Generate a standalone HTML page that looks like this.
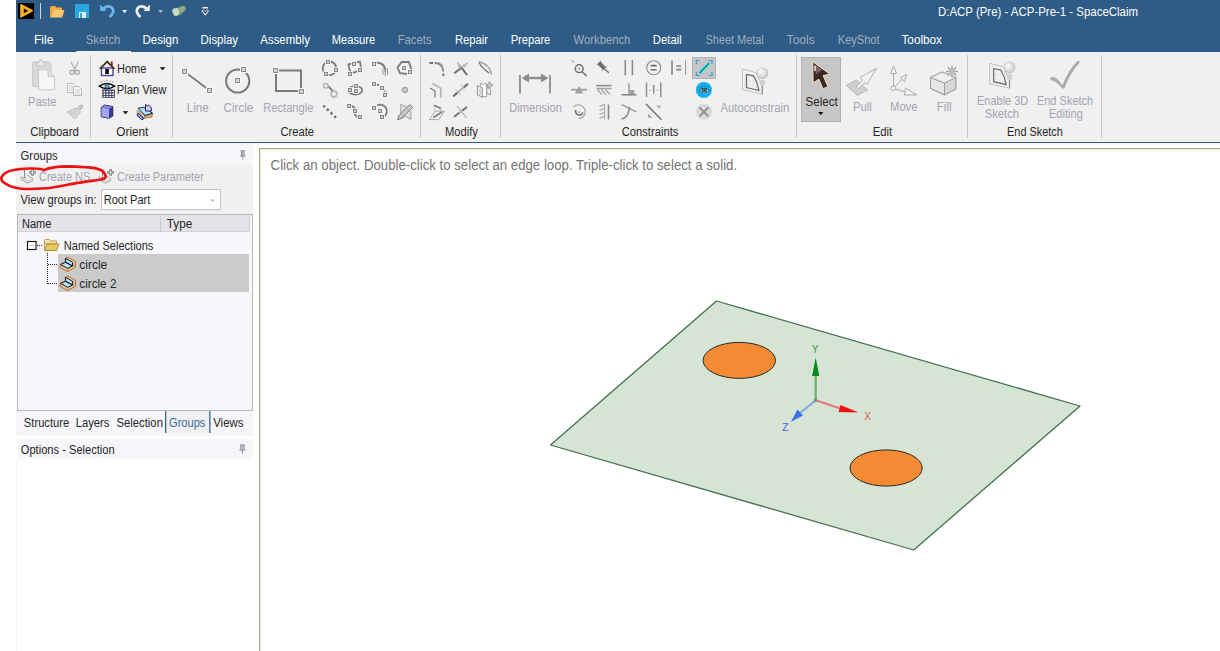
<!DOCTYPE html>
<html><head><meta charset="utf-8">
<style>
*{margin:0;padding:0}
html,body{width:1220px;height:651px;overflow:hidden;background:#fff}
svg{position:absolute;left:0;top:0;display:block}
text{font-family:"Liberation Sans",sans-serif;white-space:pre}
</style></head><body>
<svg width="1220" height="651" viewBox="0 0 1220 651">
<rect x="16" y="0" width="1204" height="52" fill="#2e5c87"/>
<rect x="16" y="52" width="1204" height="90" fill="#f0f0f0"/>
<rect x="76.5" y="51" width="54.5" height="1.2" fill="#f6f4f2"/>
<rect x="16" y="142" width="1204" height="1" fill="#2e5c87"/>
<rect x="18" y="3" width="16" height="16" fill="#000"/>
<path d="M21 4.8 L32.2 10.7 L21 16.9 Z" fill="#f7b41f" stroke="#f7b41f" stroke-width="1.6" stroke-linejoin="round"/><path d="M23.8 8.4 L28.3 10.8 L23.8 13.3 Z" fill="#000"/>
<rect x="40" y="3" width="1" height="16" fill="#cfd2d6"/>
<path d="M50 8 Q50 6 52 6 L55 6 L56.5 7.5 L61 7.5 Q62 7.5 62 8.5 L62 10 L50 10 Z" fill="#f5ae3a"/>
<path d="M50.5 17.6 L52.8 10 L64.5 10 L62.2 17.6 Z" fill="#fcc870"/>
<path d="M50 8 L50 17.6 L50.8 17.6 L52.8 10 L50.5 10 Z" fill="#f0a535"/>
<rect x="75" y="4" width="14" height="14" fill="#29a9e1"/>
<rect x="79" y="12" width="7" height="6" fill="#eeeae6"/>
<rect x="80" y="13" width="2" height="5" fill="#29a9e1"/>
<path d="M103.5 8.5 Q107 5.5 110.5 6.8 Q114 8.5 113 12.5 Q112 15 109.5 17" fill="none" stroke="#6bb8f0" stroke-width="2.7"/>
<path d="M100.2 4.5 L100.2 11 L106.5 11 Z" fill="#6bb8f0"/>
<path d="M122 10 L127.2 10 L124.6 13.2 Z" fill="#fff"/>
<path d="M146.5 8.5 Q143 5.5 139.5 6.8 Q136 8.5 137 12.5 Q138 15 140.5 17" fill="none" stroke="#efefef" stroke-width="2.7"/>
<path d="M149.8 4.5 L149.8 11 L143.5 11 Z" fill="#efefef"/>
<path d="M158 10 L163.2 10 L160.6 13.2 Z" fill="#b8aca8"/>
<path d="M176.5 8.5 L181.5 6 L185 6.2 L186.2 9 L184.5 11.2 L179.5 15.5 L177.5 14 Z" fill="#7f9f74"/>
<path d="M178 9.5 L184.5 7 M178.5 12 L185 8.8" stroke="#a8c098" stroke-width="0.8"/>
<path d="M172.1 11.5 L173.3 8.6 L177.3 8.1 L179.2 11.2 L178.2 15.4 L174.3 16.1 Z" fill="#c8dcc0"/>
<rect x="202.5" y="7" width="5.5" height="1.5" fill="#eef0f4"/>
<path d="M202.6 10.3 L205.3 13.6 L208 10.3" fill="none" stroke="#f0f0f0" stroke-width="2.6"/><path d="M203.2 10.6 L205.3 13 L207.4 10.6" fill="none" stroke="#2b2b2b" stroke-width="1.1"/>
<text x="33.9" y="44" font-size="12" fill="#ffffff" textLength="19.7" lengthAdjust="spacingAndGlyphs">File</text>
<text x="85.8" y="44" font-size="12" fill="#a3adb8" textLength="34.6" lengthAdjust="spacingAndGlyphs">Sketch</text>
<text x="142.4" y="44" font-size="12" fill="#ffffff" textLength="36.0" lengthAdjust="spacingAndGlyphs">Design</text>
<text x="200.6" y="44" font-size="12" fill="#ffffff" textLength="37.5" lengthAdjust="spacingAndGlyphs">Display</text>
<text x="260.3" y="44" font-size="12" fill="#ffffff" textLength="49.6" lengthAdjust="spacingAndGlyphs">Assembly</text>
<text x="331.8" y="44" font-size="12" fill="#ffffff" textLength="43.4" lengthAdjust="spacingAndGlyphs">Measure</text>
<text x="397.7" y="44" font-size="12" fill="#a3adb8" textLength="33.9" lengthAdjust="spacingAndGlyphs">Facets</text>
<text x="454.9" y="44" font-size="12" fill="#ffffff" textLength="33.2" lengthAdjust="spacingAndGlyphs">Repair</text>
<text x="510.7" y="44" font-size="12" fill="#ffffff" textLength="39.6" lengthAdjust="spacingAndGlyphs">Prepare</text>
<text x="573.6" y="44" font-size="12" fill="#a3adb8" textLength="56.7" lengthAdjust="spacingAndGlyphs">Workbench</text>
<text x="652.8" y="44" font-size="12" fill="#ffffff" textLength="29.0" lengthAdjust="spacingAndGlyphs">Detail</text>
<text x="705.6" y="44" font-size="12" fill="#a3adb8" textLength="58.1" lengthAdjust="spacingAndGlyphs">Sheet Metal</text>
<text x="786.6" y="44" font-size="12" fill="#a3adb8" textLength="28.2" lengthAdjust="spacingAndGlyphs">Tools</text>
<text x="837.8" y="44" font-size="12" fill="#a3adb8" textLength="41.8" lengthAdjust="spacingAndGlyphs">KeyShot</text>
<text x="901.5" y="44" font-size="12" fill="#ffffff" textLength="40.5" lengthAdjust="spacingAndGlyphs">Toolbox</text>
<text x="938" y="16.3" font-size="12.3" fill="#fff" textLength="200" lengthAdjust="spacingAndGlyphs">D:ACP (Pre) - ACP-Pre-1 - SpaceClaim</text>
<g fill="#c6c6c6">
<rect x="90" y="55" width="1" height="83"/>
<rect x="172" y="55" width="1" height="83"/>
<rect x="420" y="55" width="1" height="83"/>
<rect x="500" y="55" width="1" height="83"/>
<rect x="796" y="55" width="1" height="83"/>
<rect x="967" y="55" width="1" height="83"/>
<rect x="1101" y="55" width="1" height="83"/>
</g>
<!-- paste -->
<rect x="32.5" y="62" width="18.5" height="24.5" rx="1.5" fill="#d9d9d9" stroke="#cacaca"/>
<path d="M36.5 62.5 L39 62.5 Q39 59.8 41 59.8 Q43 59.8 43 62.5 L45.5 62.5 L45.5 66 L36.5 66 Z" fill="#e8e8e8" stroke="#c4c4c4"/>
<path d="M38.5 69.8 L48 69.8 L54.5 76.3 L54.5 89.8 L38.5 89.8 Z" fill="#f6f6f6" stroke="#c8c8c8"/>
<path d="M48 69.8 L48 76.3 L54.5 76.3" fill="#e4e4e4" stroke="#c8c8c8"/>
<!-- scissors -->
<path d="M71 61.5 L75.5 70.5 M78.5 61.5 L74 70.5" stroke="#b4b4b4" stroke-width="1.3" fill="none"/>
<circle cx="72" cy="72.3" r="2.2" fill="#e6e6e6" stroke="#a8a8a8" stroke-width="1.1"/>
<circle cx="77.3" cy="72.3" r="2.2" fill="#e6e6e6" stroke="#a8a8a8" stroke-width="1.1"/>
<!-- copy -->
<path d="M67.5 83.5 L73.5 83.5 L75.5 85.5 L75.5 92.5 L67.5 92.5 Z" fill="#f8f8f8" stroke="#bdbdbd"/>
<path d="M73.5 86.5 L79 86.5 L81.5 89 L81.5 95.5 L73.5 95.5 Z" fill="#f8f8f8" stroke="#b8b8b8"/>
<path d="M69 86h4.5M69 88h4.5M69 90h4M75 90h5M75 92h5M75 94h5" stroke="#c4c4c4" stroke-width="0.8"/>
<!-- brush -->
<path d="M78 107.5 L81.5 104.8 L83 106.8 L80.5 110 Z" fill="#c8c8c8" stroke="#a8a8a8" stroke-width="0.8"/>
<path d="M67.5 112 L76.5 108 L80.5 112 L74.5 119 Z" fill="#e8e8e8" stroke="#a8a8a8" stroke-width="0.9"/>
<path d="M69 112.5 L77 109.5 L79 112 L74 117 Z" fill="#d0d0d0"/>
<!-- home -->
<rect x="101.5" y="68" width="11.5" height="7.5" fill="#fff" stroke="#4a3f9f" stroke-width="1.4"/>
<rect x="105.3" y="69" width="3.5" height="5" fill="#000"/>
<path d="M99.8 68.8 L107.2 61.6 L114.3 68.8" fill="none" stroke="#3b3a15" stroke-width="1.8"/>
<rect x="111" y="61.5" width="1.6" height="5" fill="#8a1010"/>
<path d="M159.8 67.2 L165.3 67.2 L162.55 70.2 Z" fill="#000"/>
<!-- plan view -->
<path d="M99.3 86.2 Q107 80.8 114.6 86.2 Q107 91.2 99.3 86.2 Z" fill="#fff" stroke="#111" stroke-width="1.5"/>
<circle cx="107" cy="86.2" r="2.1" fill="#5fa8c0" stroke="#2a4860" stroke-width="0.7"/>
<path d="M101.5 82.5 L100.8 81.3 M104.2 81.5 L103.9 80.6 M107 81.1 V80.1 M109.8 81.5 L110.1 80.6 M112.5 82.5 L113.2 81.3" stroke="#333" stroke-width="0.8"/>
<rect x="102.3" y="89.5" width="12.5" height="8.3" fill="#35335f"/>
<g fill="#fff">
<rect x="103.5" y="90.8" width="1.8" height="1.6"/><rect x="106.5" y="90.8" width="1.8" height="1.6"/><rect x="109.5" y="90.8" width="1.8" height="1.6"/><rect x="112.3" y="90.8" width="1.6" height="1.6"/>
<rect x="103.5" y="93.4" width="1.8" height="1.6"/><rect x="106.5" y="93.4" width="1.8" height="1.6"/><rect x="109.5" y="93.4" width="1.8" height="1.6"/><rect x="112.3" y="93.4" width="1.6" height="1.6"/>
<rect x="103.5" y="95.8" width="1.8" height="1.2"/><rect x="106.5" y="95.8" width="1.8" height="1.2"/><rect x="109.5" y="95.8" width="1.8" height="1.2"/><rect x="112.3" y="95.8" width="1.6" height="1.2"/>
</g>
<!-- cube -->
<path d="M101.2 107.5 L104.5 105 L112.8 106.5 L112.8 116 L109 118.3 L101.2 116.8 Z" fill="#3b3b9a" stroke="#1f1f5a" stroke-width="0.9"/>
<path d="M101.5 107.6 L109 109 L109 118 L101.5 116.6 Z" fill="#a4a4f2"/>
<path d="M101.5 107.5 L104.6 105.3 L112.5 106.7 L109 109 Z" fill="#8585dd"/>
<path d="M122.7 111.2 L128.3 111.2 L125.5 114.2 Z" fill="#000"/>
<!-- orient icon 2 -->
<path d="M137.2 110.4 L145 115.4 L144.6 118.4 L137.2 113.6 Z" fill="#f2cfa4" stroke="#8a6a40" stroke-width="0.6"/>
<path d="M145 115.4 L152.7 113.3 L152 117.1 L144.6 118.4 Z" fill="#d9a870" stroke="#8a6a40" stroke-width="0.6"/>
<path d="M137.9 108.4 L143.7 107.3 L152.7 113.3 L145 115.4 Z" fill="#b0e0f4" stroke="#102838" stroke-width="1"/>
<path d="M145.5 104.5 L145.5 111 L151.5 111 L151.2 107.5 L148.8 105.3 L147.3 106 Z" fill="#d4d0f8" stroke="#20206a" stroke-width="1"/>
<path d="M138.3 114.8 L142.2 118.4" stroke="#20206a" stroke-width="3.2" stroke-linecap="round"/>
<path d="M138.3 114.8 L142.2 118.4" stroke="#b8b8f0" stroke-width="1.4" stroke-linecap="round"/>
<line x1="187" y1="73.5" x2="207" y2="88.5" stroke="#fafafa" stroke-width="4"/><line x1="187" y1="73.5" x2="207" y2="88.5" stroke="#7b7b7b" stroke-width="2"/>
<rect x="181" y="68" width="7" height="7" fill="#fafafa"/><rect x="182.5" y="69.5" width="4" height="4" fill="#d6d6d6" stroke="#8a8a8a" stroke-width="1"/>
<rect x="206" y="87" width="7" height="7" fill="#fafafa"/><rect x="207.5" y="88.5" width="4" height="4" fill="#d6d6d6" stroke="#8a8a8a" stroke-width="1"/>
<circle cx="237.7" cy="81" r="11.6" fill="none" stroke="#7b7b7b" stroke-width="2"/>
<rect x="234" y="77" width="7" height="7" fill="#fafafa"/><rect x="235.5" y="78.5" width="4" height="4" fill="#d6d6d6" stroke="#8a8a8a" stroke-width="1"/>
<rect x="240" y="66" width="7" height="7" fill="#fafafa"/><rect x="241.5" y="67.5" width="4" height="4" fill="#d6d6d6" stroke="#8a8a8a" stroke-width="1"/>
<rect x="276" y="70.5" width="25" height="20.5" fill="none" stroke="#7b7b7b" stroke-width="2"/>
<rect x="272" y="67" width="7" height="7" fill="#fafafa"/><rect x="273.5" y="68.5" width="4" height="4" fill="#d6d6d6" stroke="#8a8a8a" stroke-width="1"/>
<rect x="298" y="88" width="7" height="7" fill="#fafafa"/><rect x="299.5" y="89.5" width="4" height="4" fill="#d6d6d6" stroke="#8a8a8a" stroke-width="1"/>
<circle cx="329.5" cy="68.3" r="6.8" fill="none" stroke="#7b7b7b" stroke-width="1.8"/>
<rect x="325.20" y="59.20" width="5.6" height="5.6" fill="#fafafa"/><rect x="326.50" y="60.50" width="3" height="3" fill="#d4d4d4" stroke="#858585" stroke-width="1"/>
<rect x="333.20" y="67.20" width="5.6" height="5.6" fill="#fafafa"/><rect x="334.50" y="68.50" width="3" height="3" fill="#d4d4d4" stroke="#858585" stroke-width="1"/>
<rect x="323.20" y="71.20" width="5.6" height="5.6" fill="#fafafa"/><rect x="324.50" y="72.50" width="3" height="3" fill="#d4d4d4" stroke="#858585" stroke-width="1"/>
<path d="M348.3 64.3 L360 61.5 L361.3 70.3 L350.5 73.3 Z" fill="none" stroke="#7b7b7b" stroke-width="1.8"/>
<rect x="351.20" y="61.20" width="5.6" height="5.6" fill="#fafafa"/><rect x="352.50" y="62.50" width="3" height="3" fill="#d4d4d4" stroke="#858585" stroke-width="1"/>
<rect x="357.20" y="67.20" width="5.6" height="5.6" fill="#fafafa"/><rect x="358.50" y="68.50" width="3" height="3" fill="#d4d4d4" stroke="#858585" stroke-width="1"/>
<rect x="347.20" y="71.20" width="5.6" height="5.6" fill="#fafafa"/><rect x="348.50" y="72.50" width="3" height="3" fill="#d4d4d4" stroke="#858585" stroke-width="1"/>
<path d="M376 62.5 Q385.5 62.5 385.5 72" fill="none" stroke="#7b7b7b" stroke-width="1.8"/><path d="M383 68 V75 M387.5 68 V75" stroke="#9a9a9a" stroke-width="1"/><rect x="384.5" y="70" width="1.6" height="6" fill="#b0b0b0"/>
<rect x="371.20" y="61.20" width="5.6" height="5.6" fill="#fafafa"/><rect x="372.50" y="62.50" width="3" height="3" fill="#d4d4d4" stroke="#858585" stroke-width="1"/>
<path d="M409.5 71.5 L411.5 69.5 L408.8 62 L401.8 62 L397.5 67.5 L400 73.2 L407 74" fill="none" stroke="#7b7b7b" stroke-width="1.8"/>
<rect x="401.20" y="65.20" width="5.6" height="5.6" fill="#fafafa"/><rect x="402.50" y="66.50" width="3" height="3" fill="#d4d4d4" stroke="#858585" stroke-width="1"/>
<rect x="407.20" y="69.20" width="5.6" height="5.6" fill="#fafafa"/><rect x="408.50" y="70.50" width="3" height="3" fill="#d4d4d4" stroke="#858585" stroke-width="1"/>
<line x1="327" y1="84.8" x2="334.5" y2="92.8" stroke="#7b7b7b" stroke-width="1.8"/><circle cx="325.8" cy="85.8" r="2.3" fill="#f4f4f4" stroke="#b4b4b4" stroke-width="1.5"/><circle cx="334" cy="94" r="2.8" fill="#f4f4f4" stroke="#b4b4b4" stroke-width="1.7"/>
<ellipse cx="355.3" cy="90.3" rx="7" ry="4.2" fill="none" stroke="#7b7b7b" stroke-width="1.8"/>
<rect x="347.20" y="87.20" width="5.6" height="5.6" fill="#fafafa"/><rect x="348.50" y="88.50" width="3" height="3" fill="#d4d4d4" stroke="#858585" stroke-width="1"/>
<rect x="353.20" y="83.20" width="5.6" height="5.6" fill="#fafafa"/><rect x="354.50" y="84.50" width="3" height="3" fill="#d4d4d4" stroke="#858585" stroke-width="1"/>
<rect x="353.20" y="88.20" width="5.6" height="5.6" fill="#fafafa"/><rect x="354.50" y="89.50" width="3" height="3" fill="#d4d4d4" stroke="#858585" stroke-width="1"/>
<path d="M376 84.5 Q383 85.5 386 94" fill="none" stroke="#7b7b7b" stroke-width="2" stroke-dasharray="3 1.5"/>
<rect x="371.20" y="81.20" width="5.6" height="5.6" fill="#fafafa"/><rect x="372.50" y="82.50" width="3" height="3" fill="#d4d4d4" stroke="#858585" stroke-width="1"/>
<rect x="379.20" y="85.20" width="5.6" height="5.6" fill="#fafafa"/><rect x="380.50" y="86.50" width="3" height="3" fill="#d4d4d4" stroke="#858585" stroke-width="1"/>
<rect x="382.20" y="92.20" width="5.6" height="5.6" fill="#fafafa"/><rect x="383.50" y="93.50" width="3" height="3" fill="#d4d4d4" stroke="#858585" stroke-width="1"/>
<circle cx="404.9" cy="89.9" r="2.8" fill="#c6c6c6" stroke="#9c9c9c" stroke-width="1"/>
<rect x="322.90000000000003" y="105.2" width="2.4" height="2.4" fill="#6e6e6e" transform="rotate(45 324.1 106.4)"/><rect x="326.6" y="108.5" width="2.4" height="2.4" fill="#6e6e6e" transform="rotate(45 327.8 109.7)"/><rect x="330.3" y="112.1" width="2.4" height="2.4" fill="#6e6e6e" transform="rotate(45 331.5 113.3)"/><rect x="334.0" y="115.7" width="2.4" height="2.4" fill="#6e6e6e" transform="rotate(45 335.2 116.9)"/>
<path d="M350.5 106 Q355 106.5 355.5 110 M354.5 113 Q355 116.5 359.5 117.5" fill="none" stroke="#7b7b7b" stroke-width="1.8"/>
<rect x="346.20" y="103.20" width="5.6" height="5.6" fill="#fafafa"/><rect x="347.50" y="104.50" width="3" height="3" fill="#d4d4d4" stroke="#858585" stroke-width="1"/>
<rect x="352.20" y="108.20" width="5.6" height="5.6" fill="#fafafa"/><rect x="353.50" y="109.50" width="3" height="3" fill="#d4d4d4" stroke="#858585" stroke-width="1"/>
<rect x="357.20" y="114.20" width="5.6" height="5.6" fill="#fafafa"/><rect x="358.50" y="115.50" width="3" height="3" fill="#d4d4d4" stroke="#858585" stroke-width="1"/>
<path d="M377 105.5 A6.5 6.5 0 1 1 383.5 117" fill="none" stroke="#7b7b7b" stroke-width="1.8"/>
<rect x="371.20" y="105.20" width="5.6" height="5.6" fill="#fafafa"/><rect x="372.50" y="106.50" width="3" height="3" fill="#d4d4d4" stroke="#858585" stroke-width="1"/>
<rect x="377.20" y="108.20" width="5.6" height="5.6" fill="#fafafa"/><rect x="378.50" y="109.50" width="3" height="3" fill="#d4d4d4" stroke="#858585" stroke-width="1"/>
<rect x="379.20" y="114.20" width="5.6" height="5.6" fill="#fafafa"/><rect x="380.50" y="115.50" width="3" height="3" fill="#d4d4d4" stroke="#858585" stroke-width="1"/>
<path d="M400.8 104.3 L406 106.5 L411 112 L411 119.5 L405.5 116.5 L400.8 119 Z" fill="#dcdcdc" stroke="#9c9c9c" stroke-width="0.9"/>
<path d="M397.5 120 L399 115.5 L409.8 104.6 L412.5 107.3 L401.7 118.2 Z" fill="#c8c8c8" stroke="#7a7a7a" stroke-width="1"/>
<g fill="none">
<path d="M429.5 63 H433" stroke="#6e6e6e" stroke-width="2"/>
<path d="M434.5 63 Q443.2 63 443.2 71.5" stroke="#8a8a8a" stroke-width="2"/>
<path d="M439 62 Q442 63 442.8 66" stroke="#c0c0c0" stroke-width="1"/>
<path d="M443.3 73.5 V76" stroke="#6e6e6e" stroke-width="2"/>
<path d="M454.2 73.2 L461.6 67.7 L467.1 75.1" stroke="#707070" stroke-width="2"/>
<path d="M457.3 62.5 L461.6 67.7 M467.6 63 L461.6 67.7" stroke="#a8a8a8" stroke-width="1.2"/>
<circle cx="459.5" cy="66" r="1.6" fill="#b8b8b8"/><circle cx="464.3" cy="65.8" r="1.6" fill="#b8b8b8"/>
<path d="M478.8 61.8 Q489.5 64 491.5 74.3" stroke="#a0a0a0" stroke-width="1.6"/>
<path d="M479 62.5 Q482 68 489 73" stroke="#6e6e6e" stroke-width="1.2"/>
<path d="M432.5 83.5 L440.8 88.3 L440.8 97.5" stroke="#b4b4b4" stroke-width="1.8"/>
<path d="M430 88 L435 91 L435 97.5" stroke="#6e6e6e" stroke-width="1.1"/>
<path d="M456 93.8 L465 86.2" stroke="#9a9a9a" stroke-width="1.3"/>
<path d="M453.8 95.8 L456.8 93.2 M464.3 86.8 L467.3 84.3" stroke="#707070" stroke-width="2.2" stroke-linecap="round"/>
<path d="M455.5 89.5 L461 95.5 M460 84 L465.5 90.5" stroke="#c0c0c0" stroke-width="1"/>
<circle cx="458.5" cy="92" r="1.3" fill="#b4b4b4"/><circle cx="463" cy="88" r="1.3" fill="#b4b4b4"/>
<path d="M480.4 83.2 L483.5 84.5 L485.3 83.3 L486.7 84 L486.7 96.6 L480.4 96.6 Z" fill="#fbfbfb" stroke="#9a9a9a" stroke-width="0.9"/>
<path d="M486.8 86.8 L490.6 89.1 L490.6 94.9 L486.8 93.2 Z" fill="#ececec" stroke="#8e8e8e" stroke-width="0.9"/>
<path d="M477.4 85.4 L482.4 87.8 L482.4 97.2 L477.4 94.9 Z" fill="#f2f2f2" stroke="#8a8a8a" stroke-width="0.9"/>
<rect x="479.3" y="88.5" width="1.8" height="6" fill="#c8c8c8"/>
<path d="M489.4 81.6 L490.6 84 L493 85.2 L490.6 86.4 L489.4 88.8 L488.2 86.4 L485.8 85.2 L488.2 84 Z" fill="#cacaca" stroke="#8a8a8a" stroke-width="0.8"/>
<path d="M434.3 105.5 V111 M440.7 108.6 V112" stroke="#c4c4c4" stroke-width="0.8"/>
<path d="M434.1 105.2 L441 108.6" stroke="#7a7a7a" stroke-width="1.7"/>
<path d="M435.1 111.1 L444.4 111.1 L438.8 119.6 L429.5 119.6 Z" fill="#fafafa" stroke="#a6a6a6" stroke-width="1"/>
<path d="M433.9 117.2 L441.4 112.3" stroke="#8a8a8a" stroke-width="2.2" stroke-linecap="round"/>
<path d="M454 116.8 L467 107" stroke="#6e6e6e" stroke-width="1.8"/>
<path d="M457 106 L466.5 118" stroke="#a8a8a8" stroke-width="1.1"/>
<circle cx="461" cy="112" r="1.8" fill="#c4c4c4"/>
</g>
<g fill="none">
<!-- dimension -->
<path d="M520 75 V93.5 M550 75 V93.5" stroke="#8c8c8c" stroke-width="1.8"/>
<path d="M527 78 H543" stroke="#8c8c8c" stroke-width="2.4"/>
<path d="M521.5 78 L529 73.5 L529 82.5 Z M548.5 78 L541 73.5 L541 82.5 Z" fill="#8c8c8c"/>
<!-- coincident -->
<circle cx="579.2" cy="68.7" r="3.9" stroke="#707070" stroke-width="1.5"/>
<path d="M582.2 71.8 L586.5 76" stroke="#707070" stroke-width="1.6"/>
<path d="M571.5 60 L574.2 62.8" stroke="#8a8a8a" stroke-width="1"/>
<path d="M579.2 67.2 V70.2 M577.7 68.7 H580.7" stroke="#9a9a9a" stroke-width="0.8"/>
<!-- pin -->
<path d="M596.8 64.6 L600.6 60.8 L601.4 62.6 L605.2 66.4 L607.3 66.1 L602.1 71.3 L602.4 69.2 L598.6 65.4 Z" fill="#6e6e6e"/>
<path d="M604.5 68.7 L608.8 72.8" stroke="#6e6e6e" stroke-width="1.3"/>
<!-- parallel -->
<path d="M625.3 60 V75.3 M632.4 60 V75.3" stroke="#858585" stroke-width="1.5"/>
<!-- equal circle -->
<circle cx="653.7" cy="67.7" r="7" stroke="#8e8e8e" stroke-width="1.1"/>
<path d="M650.6 65.6 H656.6 M650.6 69.7 H656.6" stroke="#6e6e6e" stroke-width="1.6"/>
<!-- |=| -->
<path d="M672 60.5 V75" stroke="#8a8a8a" stroke-width="1.7"/>
<path d="M685.6 60.5 V75" stroke="#9a9a9a" stroke-width="1.1"/>
<path d="M676.3 66 H681.3 M676.3 69.6 H681.3" stroke="#808080" stroke-width="1.6"/>
<!-- row2 -->
<path d="M571 89.7 H587" stroke="#a0a0a0" stroke-width="1.8"/>
<path d="M579 86 L583.3 93.5 L574.7 93.5 Z" fill="#a0a0a0"/>
<path d="M596.3 85.6 H611.5" stroke="#8a8a8a" stroke-width="1.5"/>
<path d="M596.5 88.5 H611.5 M597.5 89.5 L602 94.5 M601.5 89.5 L606 94.5 M605.5 89.5 L610 94.5" stroke="#a4a4a4" stroke-width="1.3"/>
<path d="M629 83.5 V94.5" stroke="#a0a0a0" stroke-width="1.6"/>
<path d="M621.5 94.8 H636.5" stroke="#8a8a8a" stroke-width="1.6"/>
<rect x="630" y="90" width="4.3" height="4" fill="#a0a0a0"/>
<path d="M646.5 82.5 V97 M660.8 82.5 V97" stroke="#909090" stroke-width="1.5"/>
<path d="M653.7 85 V93.8" stroke="#909090" stroke-width="1.5"/>
<path d="M648.5 90.3 H651.5 M656 90.3 H659" stroke="#b8b8b8" stroke-width="0.9"/>
<!-- row3 -->
<path d="M573.5 107 A6.8 6.8 0 1 1 578.5 118.5" stroke="#a8a8a8" stroke-width="1.1"/>
<path d="M575.8 110 A3.8 3.8 0 1 0 583 112.5" stroke="#707070" stroke-width="1.6"/>
<circle cx="579" cy="112" r="0.8" fill="#808080"/>
<path d="M608.5 104.5 V119.5" stroke="#8a8a8a" stroke-width="1.6"/>
<path d="M604.5 104.5 V119.5" stroke="#a8a8a8" stroke-width="1"/>
<path d="M599.5 106.5 L604 104.5 M599.5 110.5 L604 108.5 M599.5 114.5 L604 112.5 M599.5 118.5 L604 116.5" stroke="#a4a4a4" stroke-width="1.1"/>
<path d="M621.5 104.5 L636.5 112" stroke="#8a8a8a" stroke-width="1.3"/>
<path d="M621.5 119 Q628.5 118 629.5 107" stroke="#8a8a8a" stroke-width="1.6"/>
<path d="M646 104 L661.5 119.7" stroke="#707070" stroke-width="1.5"/>
<path d="M656.5 105.5 L660.2 105.5 L660.2 109.5 Z M648 113.5 L648 117.8 L652.5 117.8 Z" fill="#a8a8a8"/>
<!-- highlighted -->
<rect x="692.5" y="57.5" width="23" height="21" fill="#c6c6c6" stroke="#b2b2b2" stroke-width="1"/>
<path d="M696.3 64 V60.5 H699.5 M708.5 60.5 H712 V64 M712 72 V75.5 H708.5 M699.5 75.5 H696.3 V72" stroke="#2e9ce2" stroke-width="1.2"/>
<path d="M699.5 73.2 L709 63.2" stroke="#20e8f0" stroke-width="3"/>
<path d="M699.5 73.2 L709 63.2" stroke="#1a3a3a" stroke-width="1"/>
<!-- blue circle -->
<circle cx="703.9" cy="90" r="8" fill="#12aff0"/>
<path d="M699 90.2 Q704 86 709.8 90.2 Q704 94 699 90.2 Z" fill="#2a2a2a"/>
<path d="M700.5 87.8 L700.2 87 M702.5 87 V86.2 M705 86.8 V86 M707.5 87.3 L707.8 86.5" stroke="#3a3a3a" stroke-width="0.8"/>
<circle cx="701.3" cy="90.4" r="0.9" fill="#f0f0f0"/><circle cx="707.5" cy="90.4" r="0.9" fill="#f0f0f0"/>
<circle cx="704.4" cy="90.3" r="1.7" fill="#5a9ab0"/><circle cx="704.4" cy="90.3" r="0.7" fill="#000"/>
<rect x="703" y="93" width="3" height="0.8" fill="#a08878"/>
<!-- gray X -->
<circle cx="703.9" cy="111.8" r="8" fill="#d9d9d9"/>
<path d="M699.4 107.3 L708.4 116.3 M708.4 107.3 L699.4 116.3" stroke="#8c8c8c" stroke-width="1.8"/>
</g>
<g fill="none">
<path d="M742.5 69.2 L756 72.5 L762.3 86 L762.3 94 L742.5 89.6 Z" fill="#f4f4f4" stroke="#b8b8b8" stroke-width="0.9"/>
<path d="M745 71 V89.5 M749 72 V90.5 M753 73 V91.5 M757 74 V92.5 M742.5 74 L760 78 M742.5 79 L761 83 M742.5 84 L762 88" stroke="#dedede" stroke-width="0.6"/>
<path d="M762.3 86 V94" stroke="#8a8a8a" stroke-width="1.2"/>
<path d="M746.5 74.5 L746.5 87.5 L759 90.5 Q757.5 82 753.5 75.8 Z" stroke="#6a6a6a" stroke-width="1.2"/>
<path d="M759.5 80.5 Q762.3 84 762.3 85 Q762.3 84 765 80.5" fill="#d0d0d0"/>
<rect x="759.8" y="80" width="5" height="5.5" rx="1" fill="#cfcfcf"/>
<circle cx="762.3" cy="73.3" r="5.9" fill="#c4c4c4"/><circle cx="762" cy="73" r="5.1" fill="#d6d6d6"/><circle cx="761.5" cy="72.4" r="3.8" fill="#e4e4e4"/><circle cx="760.9" cy="71.6" r="2.3" fill="#f4f4f4"/>
</g>
<g>
</g>
<rect x="801.5" y="57.5" width="39" height="64" fill="#c6c6c6" stroke="#b2b2b2"/>
<path d="M812.8 61.7 L830 74.2 L823.2 75.6 L828 86.7 L822.9 88.8 L818.9 79.3 L813.1 83 Z" fill="#3e2a22" stroke="#f8e4c8" stroke-width="1"/>
<path d="M814.2 64 L822 69.8 L816 74.5 Z" fill="#7a6660"/><path d="M815 66 V71" stroke="#f4f0f0" stroke-width="1.4"/>
<path d="M818.2 112 L823.3 112 L820.75 115 Z" fill="#000"/>
<!-- pull -->
<path d="M846.2 85.4 L856.4 80 L867.5 89.8 L857.7 95.5 Z" fill="#d0d0d0" stroke="#b4b4b4" stroke-width="0.9"/>
<path d="M876.6 68.2 L866.8 84.4 L865 82.5 L858.5 88.5 L856.5 86.5 L862.5 80 L860 77.6 Z" fill="#f2f2f2" stroke="#a8a8a8" stroke-width="0.9"/>
<!-- move -->
<g fill="none" stroke="#a0a0a0" stroke-width="0.9">
<path d="M893.5 86 V73"/><path d="M893.5 65.8 L896.5 73.5 L890.5 73.5 Z" fill="#f4f4f4"/>
<path d="M895 86.5 L903 78.5"/><path d="M906.5 74.5 L904.5 81.5 L900.5 77.5 Z" fill="#f4f4f4"/>
<path d="M895.5 89.5 L905 91.5"/><path d="M916.5 94.8 L904.5 95 L905.5 88.2 Z" fill="#f4f4f4"/>
<circle cx="893.2" cy="88.2" r="2.3" fill="#f4f4f4"/>
</g>
<path d="M896 89 L905 92" stroke="#c8c8c8" stroke-width="1.6"/>
<!-- fill -->
<path d="M930.5 77.5 L942 72 L955.8 77.5 L955.8 89 L944.5 94.8 L930.5 88.5 Z" fill="#e6e6e6" stroke="#9a9a9a" stroke-width="0.9"/>
<path d="M930.5 77.5 L944.5 83 L955.8 77.5 M944.5 83 V94.8" fill="none" stroke="#9a9a9a" stroke-width="0.9"/>
<path d="M944.5 83 L955.8 77.5 L955.8 89 L944.5 94.8 Z" fill="#d8d8d8"/>
<path d="M930.5 77.5 L942 72 L955.8 77.5 L944.5 83 Z" fill="#eeeeee"/>
<path d="M930.5 77.5 L942 72 L955.8 77.5 L955.8 89 L944.5 94.8 L930.5 88.5 Z M930.5 77.5 L944.5 83 L955.8 77.5 M944.5 83 V94.8" fill="none" stroke="#9a9a9a" stroke-width="0.9"/>
<circle cx="952" cy="71.4" r="4.5" fill="#f0f0f0"/>
<path d="M952 65.5 V77.3 M946.1 71.4 H957.9 M947.8 67.2 L956.2 75.6 M956.2 67.2 L947.8 75.6" stroke="#a8a8a8" stroke-width="1.5"/>
<circle cx="952" cy="71.4" r="2" fill="#c0c0c0"/>
<!-- enable 3d -->
<g transform="translate(247.2 -5.8)"><g fill="none">
<path d="M742.5 69.2 L756 72.5 L762.3 86 L762.3 94 L742.5 89.6 Z" fill="#f4f4f4" stroke="#b8b8b8" stroke-width="0.9"/>
<path d="M745 71 V89.5 M749 72 V90.5 M753 73 V91.5 M757 74 V92.5 M742.5 74 L760 78 M742.5 79 L761 83 M742.5 84 L762 88" stroke="#dedede" stroke-width="0.6"/>
<path d="M762.3 86 V94" stroke="#8a8a8a" stroke-width="1.2"/>
<path d="M746.5 74.5 L746.5 87.5 L759 90.5 Q757.5 82 753.5 75.8 Z" stroke="#6a6a6a" stroke-width="1.2"/>
<path d="M759.5 80.5 Q762.3 84 762.3 85 Q762.3 84 765 80.5" fill="#d0d0d0"/>
<rect x="759.8" y="80" width="5" height="5.5" rx="1" fill="#cfcfcf"/>
<circle cx="762.3" cy="73.3" r="5.9" fill="#c4c4c4"/><circle cx="762" cy="73" r="5.1" fill="#d6d6d6"/><circle cx="761.5" cy="72.4" r="3.8" fill="#e4e4e4"/><circle cx="760.9" cy="71.6" r="2.3" fill="#f4f4f4"/>
</g>
</g>
<!-- check -->
<path d="M1050 77.5 Q1052 75.6 1055 77 Q1059 79 1062.3 84.5 Q1067.5 70.5 1077.5 60.3 Q1080.3 59.8 1080 62.8 Q1071 72.5 1065 88 Q1063.5 90.3 1061.6 88.5 Q1058 82.5 1051.5 80.8 Q1049 79.8 1050 77.5 Z" fill="#acacac" stroke="#f6f6f6" stroke-width="0.8"/>
<text x="30.2" y="136" font-size="12" fill="#262626" textLength="48.6" lengthAdjust="spacingAndGlyphs">Clipboard</text>
<text x="116.3" y="136" font-size="12" fill="#262626" textLength="32.1" lengthAdjust="spacingAndGlyphs">Orient</text>
<text x="280.5" y="136" font-size="12" fill="#262626" textLength="33.6" lengthAdjust="spacingAndGlyphs">Create</text>
<text x="445.0" y="136" font-size="12" fill="#262626" textLength="32.9" lengthAdjust="spacingAndGlyphs">Modify</text>
<text x="621.7" y="136" font-size="12" fill="#262626" textLength="56.7" lengthAdjust="spacingAndGlyphs">Constraints</text>
<text x="872.7" y="136" font-size="12" fill="#262626" textLength="19.5" lengthAdjust="spacingAndGlyphs">Edit</text>
<text x="1007.1" y="136" font-size="12" fill="#262626" textLength="55.7" lengthAdjust="spacingAndGlyphs">End Sketch</text>
<text x="28.0" y="106" font-size="12" fill="#a4a3b0" textLength="28.4" lengthAdjust="spacingAndGlyphs">Paste</text>
<text x="186.8" y="112" font-size="12" fill="#a4a3b0" textLength="21.8" lengthAdjust="spacingAndGlyphs">Line</text>
<text x="223.6" y="112" font-size="12" fill="#a4a3b0" textLength="29.7" lengthAdjust="spacingAndGlyphs">Circle</text>
<text x="263.3" y="112" font-size="12" fill="#a4a3b0" textLength="50.1" lengthAdjust="spacingAndGlyphs">Rectangle</text>
<text x="509.3" y="112" font-size="12" fill="#a4a3b0" textLength="52.6" lengthAdjust="spacingAndGlyphs">Dimension</text>
<text x="720.5" y="112" font-size="12" fill="#a4a3b0" textLength="68.9" lengthAdjust="spacingAndGlyphs">Autoconstrain</text>
<text x="805.6" y="106" font-size="12" fill="#262626" textLength="32.0" lengthAdjust="spacingAndGlyphs">Select</text>
<text x="853.1" y="111" font-size="12" fill="#a4a3b0" textLength="18.6" lengthAdjust="spacingAndGlyphs">Pull</text>
<text x="890.1" y="111" font-size="12" fill="#a4a3b0" textLength="27.3" lengthAdjust="spacingAndGlyphs">Move</text>
<text x="936.7" y="111" font-size="12" fill="#a4a3b0" textLength="14.9" lengthAdjust="spacingAndGlyphs">Fill</text>
<text x="977.0" y="105" font-size="12" fill="#a4a3b0" textLength="51.3" lengthAdjust="spacingAndGlyphs">Enable 3D</text>
<text x="984.8" y="118" font-size="12" fill="#a4a3b0" textLength="34.2" lengthAdjust="spacingAndGlyphs">Sketch</text>
<text x="1036.9" y="105" font-size="12" fill="#a4a3b0" textLength="56.3" lengthAdjust="spacingAndGlyphs">End Sketch</text>
<text x="1048.9" y="118" font-size="12" fill="#a4a3b0" textLength="34.0" lengthAdjust="spacingAndGlyphs">Editing</text>
<text x="117.0" y="73" font-size="12" fill="#262626" textLength="29.4" lengthAdjust="spacingAndGlyphs">Home</text>
<text x="116.7" y="94" font-size="12" fill="#262626" textLength="49.7" lengthAdjust="spacingAndGlyphs">Plan View</text>
<rect x="16" y="143" width="237" height="22" fill="#f5f5fa"/>
<rect x="16" y="165" width="237" height="49" fill="#f0f0f0"/>
<!-- pin -->
<g fill="none" stroke="#8a8a8a" stroke-width="1">
<path d="M240.5 150.8 H245 M241.5 151 V156 M244 151 V156 M240 156 H245.5 M242.75 156 V159.5"/>
</g>
<rect x="242" y="151" width="2" height="5" fill="#b0b0b0"/>
<!-- create ns icons -->
<g>
<path d="M21.3 176.2 V179.5 L27.6 183.2 L32.7 180.6 V178.4 L26.5 174.7" fill="#f2f2f2" stroke="#a4a4a4" stroke-width="1"/>
<path d="M22.3 178.3 L27.6 181.3 L31.8 179.2" fill="none" stroke="#b8b8b8" stroke-width="0.9"/>
<path d="M24.5 169.5 V177.6 M23.3 169.8 H25.7 M22.8 177.6 H26.2" stroke="#8a8a8a" stroke-width="1" fill="none"/>
<path d="M31.7 169.5 H33.5 V171.5 H35.5 V173.3 H33.5 V175.3 H31.7 V173.3 H29.7 V171.5 H31.7 Z" fill="#e4e4e4" stroke="#fafafa" stroke-width="2.6" stroke-linejoin="miter"/><path d="M31.7 169.5 H33.5 V171.5 H35.5 V173.3 H33.5 V175.3 H31.7 V173.3 H29.7 V171.5 H31.7 Z" fill="#e4e4e4" stroke="#7a7a7a" stroke-width="1" stroke-linejoin="miter"/>
</g>
<g transform="translate(78 0)">
<path d="M21.3 176.2 V179.5 L27.6 183.2 L32.7 180.6 V178.4 L26.5 174.7" fill="#f2f2f2" stroke="#a4a4a4" stroke-width="1"/>
<path d="M22.3 178.3 L27.6 181.3 L31.8 179.2" fill="none" stroke="#b8b8b8" stroke-width="0.9"/>
<path d="M24.5 169.5 V177.6 M23.3 169.8 H25.7 M22.8 177.6 H26.2" stroke="#8a8a8a" stroke-width="1" fill="none"/>
<path d="M31.7 169.5 H33.5 V171.5 H35.5 V173.3 H33.5 V175.3 H31.7 V173.3 H29.7 V171.5 H31.7 Z" fill="#e4e4e4" stroke="#fafafa" stroke-width="2.6" stroke-linejoin="miter"/><path d="M31.7 169.5 H33.5 V171.5 H35.5 V173.3 H33.5 V175.3 H31.7 V173.3 H29.7 V171.5 H31.7 Z" fill="#e4e4e4" stroke="#7a7a7a" stroke-width="1" stroke-linejoin="miter"/>
</g>
<!-- combobox -->
<rect x="101.5" y="189.5" width="119" height="20" fill="#fff" stroke="#c2c2c2"/>
<path d="M210.3 199.5 L215 199.5 L212.65 202.3 Z" fill="#b8b8b8"/>
<!-- grid -->
<rect x="17.5" y="214.5" width="235" height="196" fill="#f7f7fb" stroke="#b8b8b8"/>
<rect x="18" y="215" width="232" height="16" fill="#e3e3e8"/>
<rect x="18" y="231" width="232" height="1" fill="#d2d2d8"/>
<rect x="160" y="216" width="1" height="15" fill="#c8c8d0"/>
<rect x="249" y="216" width="1" height="15" fill="#c8c8d0"/>
<!-- tree -->
<rect x="27.5" y="241.5" width="8.5" height="8" fill="#fff" stroke="#111" stroke-width="1.1"/>
<rect x="29.5" y="245" width="4.5" height="1" fill="#b8b8b8"/>
<path d="M37 245.5 H42" stroke="#222" stroke-width="1" stroke-dasharray="1 1"/>
<path d="M47.5 253 V284" stroke="#222" stroke-width="1" stroke-dasharray="1 1"/>
<path d="M48 264.5 H57 M48 283.5 H57" stroke="#222" stroke-width="1" stroke-dasharray="1 1"/>
<path d="M44.5 240.5 Q44.5 239.5 45.5 239.5 L49.5 239.5 L51 241 L56.5 241 L56.5 244 L44.5 244 Z" fill="#f4e4a8" stroke="#c09048" stroke-width="0.9"/>
<path d="M44.5 250.5 L47 244 L59 244 L56.5 250.5 Z" fill="#e4cc5c" stroke="#b08030" stroke-width="0.9"/>
<path d="M44.5 241 V250.5" stroke="#c09048" stroke-width="0.9"/>
<rect x="58" y="254" width="191" height="38" fill="#cbcbcb"/>
<g>
<path d="M60.2 264.3 L65.3 262 L65.3 258.2 L67.5 257 L75.5 261.3 L75.5 267.3 L67.7 271.6 L60.2 267.5 Z" fill="#f2c48c" stroke="#9a6a3a" stroke-width="0.9"/>
<path d="M67.7 268.4 L67.7 271.6 M67.7 268.4 L75.3 264.5" stroke="#c08a50" stroke-width="0.8" fill="none"/>
<path d="M65.6 258.4 L72.6 262.3 L72.6 265.9 L65.6 262 Z" fill="#b8e2fa" stroke="#0e1e2e" stroke-width="1"/>
<path d="M60.6 264.5 L65.3 262.4 L72.6 266 L67.6 268.3 Z" fill="#b8e2fa" stroke="#0e1e2e" stroke-width="1"/>
</g>
<g transform="translate(0 19)">
<path d="M60.2 264.3 L65.3 262 L65.3 258.2 L67.5 257 L75.5 261.3 L75.5 267.3 L67.7 271.6 L60.2 267.5 Z" fill="#f2c48c" stroke="#9a6a3a" stroke-width="0.9"/>
<path d="M67.7 268.4 L67.7 271.6 M67.7 268.4 L75.3 264.5" stroke="#c08a50" stroke-width="0.8" fill="none"/>
<path d="M65.6 258.4 L72.6 262.3 L72.6 265.9 L65.6 262 Z" fill="#b8e2fa" stroke="#0e1e2e" stroke-width="1"/>
<path d="M60.6 264.5 L65.3 262.4 L72.6 266 L67.6 268.3 Z" fill="#b8e2fa" stroke="#0e1e2e" stroke-width="1"/>
</g>
<!-- bottom tabs -->
<rect x="16" y="411" width="237" height="25" fill="#f5f5fa"/>
<rect x="166" y="411" width="44" height="22" fill="#f0f0f0"/>
<rect x="165" y="411" width="1.3" height="22" fill="#3a6490"/>
<rect x="209.2" y="411" width="1.3" height="22" fill="#3a6490"/>
<rect x="18" y="439" width="234.5" height="20" fill="#f5f5fa"/>
<g fill="none" stroke="#8a8a8a" stroke-width="1">
<path d="M239.8 445 H245 M240.8 445 V450 M244 445 V450 M239.3 450 H245.5 M242.4 450 V453.5"/>
</g>
<rect x="241.3" y="445.2" width="2.2" height="4.8" fill="#b0b0b0"/>
<rect x="16" y="459" width="1" height="192" fill="#f6f6fa"/>
<text x="20.6" y="160" font-size="12" fill="#262626" textLength="37.0" lengthAdjust="spacingAndGlyphs">Groups</text>
<text x="39.0" y="181" font-size="12" fill="#a4a3b0" textLength="51.4" lengthAdjust="spacingAndGlyphs">Create NS</text>
<text x="117.0" y="181" font-size="12" fill="#a4a3b0" textLength="86.8" lengthAdjust="spacingAndGlyphs">Create Parameter</text>
<text x="20.6" y="203.5" font-size="12" fill="#262626" textLength="75.9" lengthAdjust="spacingAndGlyphs">View groups in:</text>
<text x="103.7" y="203.5" font-size="12" fill="#262626" textLength="46.7" lengthAdjust="spacingAndGlyphs">Root Part</text>
<text x="21.9" y="228" font-size="12" fill="#262626" textLength="29.5" lengthAdjust="spacingAndGlyphs">Name</text>
<text x="166.8" y="228" font-size="12" fill="#262626" textLength="25.4" lengthAdjust="spacingAndGlyphs">Type</text>
<text x="63.8" y="249.5" font-size="12" fill="#262626" textLength="89.6" lengthAdjust="spacingAndGlyphs">Named Selections</text>
<text x="79.3" y="269" font-size="12" fill="#262626" textLength="28.0" lengthAdjust="spacingAndGlyphs">circle</text>
<text x="79.3" y="287.5" font-size="12" fill="#262626" textLength="37.1" lengthAdjust="spacingAndGlyphs">circle 2</text>
<text x="23.8" y="427" font-size="12" fill="#262626" textLength="45.5" lengthAdjust="spacingAndGlyphs">Structure</text>
<text x="75.7" y="427" font-size="12" fill="#262626" textLength="33.7" lengthAdjust="spacingAndGlyphs">Layers</text>
<text x="116.6" y="427" font-size="12" fill="#262626" textLength="46.3" lengthAdjust="spacingAndGlyphs">Selection</text>
<text x="169.0" y="427" font-size="12" fill="#3a6a9c" textLength="36.4" lengthAdjust="spacingAndGlyphs">Groups</text>
<text x="213.2" y="427" font-size="12" fill="#262626" textLength="30.3" lengthAdjust="spacingAndGlyphs">Views</text>
<text x="20.8" y="454" font-size="12" fill="#262626" textLength="93.9" lengthAdjust="spacingAndGlyphs">Options - Selection</text>
<!-- red ellipse -->
<path d="M42.3 169.3 C36 168 22 168.5 14.7 169.8 C8 171 3 174 1.5 177.2 C1 180 2 181.5 3.9 182.6 C8 185.5 11 186.8 14.7 187.5 C20 188.8 25 189.2 29.5 189 C36 188.8 43 188.6 49.2 188 C58 186.8 66 185 73.7 183.6 C80 182.5 87 181.5 93.4 180.6 C98 180 102 179.8 104.2 178.7 C106 177.5 106 176 105.2 174.7 C104 172 102.5 170.8 100.3 169.8 C96 168 92 167.6 88.5 167.4 C82 167 75 166.5 68.8 166.4 C63 166.5 58 166.8 54.1 167.4 C50 168 46 169 43.3 170.3" fill="none" stroke="#ee1111" stroke-width="2.6" stroke-linecap="round"/>
<rect x="253" y="143" width="967" height="2" fill="#f7f7fb"/>
<rect x="259" y="148" width="961" height="1" fill="#a9a693"/>
<rect x="259" y="148" width="1" height="503" fill="#a9a693"/>
<rect x="260" y="149" width="960" height="1" fill="#f1eddb"/>
<rect x="260" y="149" width="1" height="502" fill="#f1eddb"/>
<text x="270.6" y="170" font-size="14" fill="#737373" textLength="466.5" lengthAdjust="spacingAndGlyphs">Click an object. Double-click to select an edge loop. Triple-click to select a solid.</text>
<path d="M716.5 301 L1080 406 L913.7 550 L550.5 445 Z" fill="#d6e4d6" stroke="#44704c" stroke-width="1.3" stroke-linejoin="round"/>
<ellipse cx="739.3" cy="360.4" rx="36.2" ry="18" fill="#f58a35" stroke="#2a2a22" stroke-width="1"/>
<ellipse cx="886.1" cy="468" rx="36.1" ry="18.1" fill="#f58a35" stroke="#2a2a22" stroke-width="1"/>
<!-- triad -->
<path d="M815.7 400 V375" stroke="#6cae6c" stroke-width="2.2"/>
<path d="M815.7 357.5 L819.3 376 L812.1 376 Z" fill="#0a8a1a"/>
<path d="M816.5 400.5 L842 409" stroke="#e87878" stroke-width="2.2"/>
<path d="M858.5 412.6 L840.5 405 L838.5 412 Z" fill="#ee1010"/>
<path d="M815 400.8 L800 413" stroke="#8ca8e0" stroke-width="2.2"/>
<path d="M791 421.8 L797.5 409.5 L803 415.5 Z" fill="#3a6ef0"/>
<rect x="814" y="398.8" width="3" height="3" fill="#808890"/>
<text x="811.8" y="352.5" font-size="10" fill="#3a9a3a">Y</text>
<text x="864.3" y="419.8" font-size="10" fill="#e05050">X</text>
<text x="782.3" y="430.5" font-size="10" fill="#4a5ae8">Z</text>
</svg>
</body></html>
